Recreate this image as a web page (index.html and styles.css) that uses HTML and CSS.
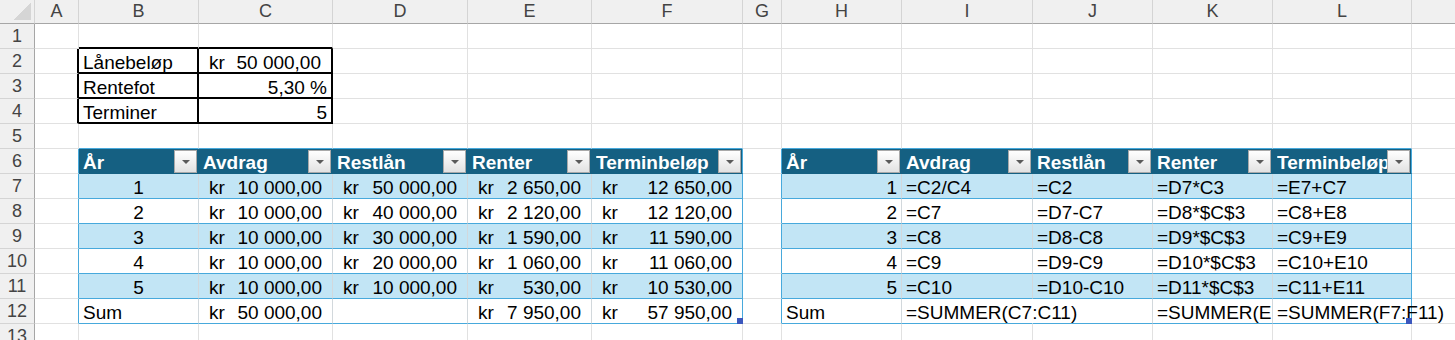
FILE: index.html
```html
<!doctype html>
<html>
<head>
    <meta charset="UTF-8">
    <title>Lån – nedbetalingsplan</title>
    <link rel="stylesheet" href="styles.css">
</head>

<body>
<div class="sheet">
    <div class="row heads">
        <div class="corner"></div><div>A</div><div>B</div><div>C</div><div>D</div><div>E</div><div>F</div><div>G</div><div>H</div><div>I</div><div>J</div><div>K</div><div>L</div><div>M</div>
    </div>
    <div class="row">
        <div class="rh">1</div><div></div><div class="box-top"></div><div class="box-top"></div><div></div><div></div><div></div><div></div><div></div><div></div><div></div><div></div><div></div><div></div>
    </div>
    <div class="row">
        <div class="rh">2</div><div class="box-left"></div><div class="box">Lånebeløp</div><div class="box acct"><span>kr</span><span>50 000,00</span></div><div></div><div></div><div></div><div></div><div></div><div></div><div></div><div></div><div></div><div></div>
    </div>
    <div class="row">
        <div class="rh">3</div><div class="box-left"></div><div class="box">Rentefot</div><div class="box r">5,30 %</div><div></div><div></div><div></div><div></div><div></div><div></div><div></div><div></div><div></div><div></div>
    </div>
    <div class="row">
        <div class="rh">4</div><div class="box-left"></div><div class="box">Terminer</div><div class="box r">5</div><div></div><div></div><div></div><div></div><div></div><div></div><div></div><div></div><div></div><div></div>
    </div>
    <div class="row">
        <div class="rh">5</div><div></div><div class="t-top"></div><div class="t-top"></div><div class="t-top"></div><div class="t-top"></div><div class="t-top"></div><div></div><div class="t-top"></div><div class="t-top"></div><div class="t-top"></div><div class="t-top"></div><div class="t-top"></div><div></div>
    </div>

    <!-- rad 6: tabelloverskrifter med filterknapper -->
    <div class="row">
        <div class="rh">6</div><div class="t-left"></div>
        <div class="th"><span>År</span><i class="dd"></i></div>
        <div class="th"><span>Avdrag</span><i class="dd"></i></div>
        <div class="th"><span>Restlån</span><i class="dd"></i></div>
        <div class="th"><span>Renter</span><i class="dd"></i></div>
        <div class="th end"><span>Terminbeløp</span><i class="dd"></i></div>
        <div class="t-left"></div>
        <div class="th"><span>År</span><i class="dd"></i></div>
        <div class="th"><span>Avdrag</span><i class="dd"></i></div>
        <div class="th"><span>Restlån</span><i class="dd"></i></div>
        <div class="th"><span>Renter</span><i class="dd"></i></div>
        <div class="th end"><span>Terminbeløp</span><i class="dd"></i></div>
        <div></div>
    </div>

    <div class="row band">
        <div class="rh">7</div><div class="t-left"></div>
        <div class="td ctr">1</div>
        <div class="td acct"><span>kr</span><span>10 000,00</span></div>
        <div class="td acct"><span>kr</span><span>50 000,00</span></div>
        <div class="td acct"><span>kr</span><span>2 650,00</span></div>
        <div class="td acct end"><span>kr</span><span>12 650,00</span></div>
        <div class="t-left"></div>
        <div class="td r">1</div><div class="td">=C2/C4</div><div class="td">=C2</div><div class="td">=D7*C3</div><div class="td end">=E7+C7</div>
        <div></div>
    </div>
    <div class="row">
        <div class="rh">8</div><div class="t-left"></div>
        <div class="td ctr">2</div>
        <div class="td acct"><span>kr</span><span>10 000,00</span></div>
        <div class="td acct"><span>kr</span><span>40 000,00</span></div>
        <div class="td acct"><span>kr</span><span>2 120,00</span></div>
        <div class="td acct end"><span>kr</span><span>12 120,00</span></div>
        <div class="t-left"></div>
        <div class="td r">2</div><div class="td">=C7</div><div class="td">=D7-C7</div><div class="td">=D8*$C$3</div><div class="td end">=C8+E8</div>
        <div></div>
    </div>
    <div class="row band">
        <div class="rh">9</div><div class="t-left"></div>
        <div class="td ctr">3</div>
        <div class="td acct"><span>kr</span><span>10 000,00</span></div>
        <div class="td acct"><span>kr</span><span>30 000,00</span></div>
        <div class="td acct"><span>kr</span><span>1 590,00</span></div>
        <div class="td acct end"><span>kr</span><span>11 590,00</span></div>
        <div class="t-left"></div>
        <div class="td r">3</div><div class="td">=C8</div><div class="td">=D8-C8</div><div class="td">=D9*$C$3</div><div class="td end">=C9+E9</div>
        <div></div>
    </div>
    <div class="row">
        <div class="rh">10</div><div class="t-left"></div>
        <div class="td ctr">4</div>
        <div class="td acct"><span>kr</span><span>10 000,00</span></div>
        <div class="td acct"><span>kr</span><span>20 000,00</span></div>
        <div class="td acct"><span>kr</span><span>1 060,00</span></div>
        <div class="td acct end"><span>kr</span><span>11 060,00</span></div>
        <div class="t-left"></div>
        <div class="td r">4</div><div class="td">=C9</div><div class="td">=D9-C9</div><div class="td">=D10*$C$3</div><div class="td end">=C10+E10</div>
        <div></div>
    </div>
    <div class="row band">
        <div class="rh">11</div><div class="t-left"></div>
        <div class="td ctr">5</div>
        <div class="td acct"><span>kr</span><span>10 000,00</span></div>
        <div class="td acct"><span>kr</span><span>10 000,00</span></div>
        <div class="td acct"><span>kr</span><span>530,00</span></div>
        <div class="td acct end"><span>kr</span><span>10 530,00</span></div>
        <div class="t-left"></div>
        <div class="td r">5</div><div class="td">=C10</div><div class="td">=D10-C10</div><div class="td">=D11*$C$3</div><div class="td end">=C11+E11</div>
        <div></div>
    </div>

    <!-- rad 12: summer -->
    <div class="row">
        <div class="rh">12</div><div class="t-left"></div>
        <div class="td">Sum</div>
        <div class="td acct"><span>kr</span><span>50 000,00</span></div>
        <div class="td"></div>
        <div class="td acct"><span>kr</span><span>7 950,00</span></div>
        <div class="td acct end handle"><span>kr</span><span>57 950,00</span></div>
        <div class="t-left"></div>
        <div class="td">Sum</div>
        <div class="td spill">=SUMMER(C7:C11)</div>
        <div class="td"></div>
        <div class="td clip">=SUMMER(E7:E11)</div>
        <div class="td end handle">=SUMMER(F7:F11)</div>
        <div></div>
    </div>
    <div class="row">
        <div class="rh">13</div><div></div><div></div><div></div><div></div><div></div><div></div><div></div><div></div><div></div><div></div><div></div><div></div><div></div>
    </div>
</div>
</body>

</html>
```

FILE: styles.css
```css
html, body {
    margin: 0;
    background: #fff;
    overflow: hidden;
}
.sheet {
    display: grid;
    grid-template-columns: 35px 44px 120px 134px 135px 124px 151px 39px 120px 131px 120px 120px 139px 120px;
    grid-template-rows: 24px;
    grid-auto-rows: 25px;
    font-family: "Liberation Sans", Arial, sans-serif;
    font-size: 19px;
    color: #000;
}
.row {
    display: contents;
}
.row > * {
    box-sizing: border-box;
    min-width: 0;
    padding: 0 4px;
    border-right: 1px solid #e1e1e1;
    border-bottom: 1px solid #e1e1e1;
    line-height: 28px;
    white-space: nowrap;
}

/* kolonne- og radoverskrifter */
.heads > * {
    padding: 0;
    background: #f0f0f0;
    border-right-color: #d4d4d4;
    border-bottom-color: #a6a6a6;
    color: #444;
    font-family: "Liberation Sans Narrow", "Liberation Sans", sans-serif;
    font-size: 18px;
    line-height: 23px;
    text-align: center;
}
.row > .rh {
    padding: 0;
    background: #f0f0f0;
    border-right-color: #a6a6a6;
    border-bottom-color: #d4d4d4;
    color: #444;
    font-size: 18px;
    line-height: 24px;
    text-align: center;
}
.heads > .corner {
    display: flex;
    justify-content: flex-end;
    align-items: flex-end;
}
.corner::after {
    content: "";
    width: 17px;
    height: 17px;
    margin: 0 3px 3px 0;
    background: linear-gradient(to bottom right, transparent 50%, #d5d5d5 50%);
}

/* justering */
.r {
    text-align: right;
}
.ctr {
    text-align: center;
}
.row > .acct {
    display: flex;
    justify-content: space-between;
    padding: 0 10px;
}

/* ramme rundt B2:C4 */
.row > .box-top {
    border-bottom: 2px solid #000;
}
.row > .box-left {
    border-right: 2px solid #000;
}
.row > .box {
    border-right: 2px solid #000;
    border-bottom: 2px solid #000;
}

/* tabellene */
.row > .t-top {
    border-bottom-color: #47a9dc;
}
.row > .t-left {
    border-right-color: #47a9dc;
}
.row > .th {
    display: flex;
    align-items: flex-end;
    padding: 0 1px 0 4px;
    background: #156082;
    border-right-color: #156082;
    border-bottom-color: #156082;
    color: #fff;
    font-weight: bold;
}
.th span {
    flex: 1;
    min-width: 0;
    overflow: hidden;
    align-self: stretch;
    padding-top: 3px;
    line-height: 21px;
}
.dd {
    flex: none;
    display: flex;
    align-items: center;
    justify-content: center;
    box-sizing: border-box;
    width: 23px;
    height: 23px;
    border: 1px solid #a9a9a9;
    background: linear-gradient(#ffffff, #e2e2e2);
}
.dd::before {
    content: "";
    border-left: 4px solid transparent;
    border-right: 4px solid transparent;
    border-top: 4px solid #5a5a5a;
}
.row > .td {
    border-right-color: #d2d8dc;
    border-bottom-color: #47a9dc;
}
.band > .td {
    background: #c2e5f5;
}
.row > .end {
    border-right-color: #47a9dc;
}
.row > .spill {
    border-right-color: transparent;
}
.clip {
    overflow: hidden;
}
.handle {
    position: relative;
}
.handle::after {
    content: "";
    position: absolute;
    right: -1px;
    bottom: -1px;
    width: 6px;
    height: 6px;
    background: #3b57bd;
}
```
